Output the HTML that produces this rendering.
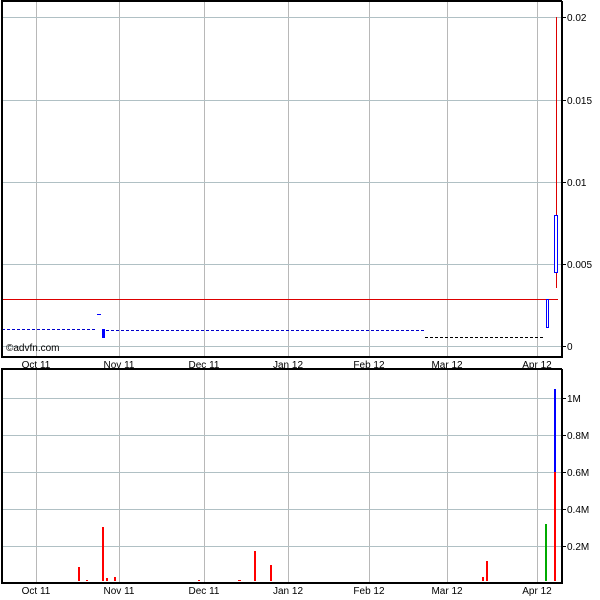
<!DOCTYPE html>
<html><head><style>body{margin:0;background:#fff}svg{display:block}text{font-family:"Liberation Sans",sans-serif;font-size:10px;fill:#000}</style></head><body>
<svg width="600" height="600" xmlns="http://www.w3.org/2000/svg">
<g stroke="#b8b8b8" stroke-width="1">
<line x1="36.5" y1="2" x2="36.5" y2="356"/><line x1="119.5" y1="2" x2="119.5" y2="356"/><line x1="204.5" y1="2" x2="204.5" y2="356"/><line x1="288.5" y1="2" x2="288.5" y2="356"/><line x1="369.5" y1="2" x2="369.5" y2="356"/><line x1="447.5" y1="2" x2="447.5" y2="356"/><line x1="537.5" y1="2" x2="537.5" y2="356"/>
<line x1="36.5" y1="370" x2="36.5" y2="583"/><line x1="119.5" y1="370" x2="119.5" y2="583"/><line x1="204.5" y1="370" x2="204.5" y2="583"/><line x1="288.5" y1="370" x2="288.5" y2="583"/><line x1="369.5" y1="370" x2="369.5" y2="583"/><line x1="447.5" y1="370" x2="447.5" y2="583"/><line x1="537.5" y1="370" x2="537.5" y2="583"/>
</g>
<g stroke="#b0c0c4" stroke-width="1">
<line x1="2" y1="17.5" x2="562" y2="17.5"/><line x1="2" y1="100.5" x2="562" y2="100.5"/><line x1="2" y1="182.5" x2="562" y2="182.5"/><line x1="2" y1="264.5" x2="562" y2="264.5"/><line x1="2" y1="346.5" x2="562" y2="346.5"/>
<line x1="2" y1="398.5" x2="562" y2="398.5"/><line x1="2" y1="435.5" x2="562" y2="435.5"/><line x1="2" y1="472.5" x2="562" y2="472.5"/><line x1="2" y1="509.5" x2="562" y2="509.5"/><line x1="2" y1="546.5" x2="562" y2="546.5"/>
</g>
<line x1="2" y1="299.5" x2="558" y2="299.5" stroke="#d00" stroke-width="1"/>
<line x1="2" y1="329.5" x2="97" y2="329.5" stroke="#00c" stroke-dasharray="3,2"/>
<line x1="106" y1="330.5" x2="425" y2="330.5" stroke="#00c" stroke-dasharray="3,2"/>
<line x1="425" y1="337.5" x2="543" y2="337.5" stroke="#000" stroke-dasharray="3,2"/>
<rect x="97" y="314" width="4" height="1" fill="#00f"/>
<rect x="102" y="329" width="3" height="9" fill="#00f"/>
<line x1="556.5" y1="17" x2="556.5" y2="288" stroke="#d00"/>
<rect x="554.5" y="215.5" width="3" height="57" fill="#fff" stroke="#00f"/>
<rect x="546.5" y="299.5" width="2" height="28" fill="#fff" stroke="#00f"/>
<g fill="none" stroke="#000" stroke-width="2">
<polyline points="562,1 2,1 2,357 562,357 562,1"/>
<polyline points="562,369 2,369 2,583 562,583 562,369"/>
</g>
<g stroke="#000"><line x1="562" y1="17.5" x2="566" y2="17.5"/><line x1="562" y1="100.5" x2="566" y2="100.5"/><line x1="562" y1="182.5" x2="566" y2="182.5"/><line x1="562" y1="264.5" x2="566" y2="264.5"/><line x1="562" y1="346.5" x2="566" y2="346.5"/>
<line x1="562" y1="398.5" x2="566" y2="398.5"/><line x1="562" y1="435.5" x2="566" y2="435.5"/><line x1="562" y1="472.5" x2="566" y2="472.5"/><line x1="562" y1="509.5" x2="566" y2="509.5"/><line x1="562" y1="546.5" x2="566" y2="546.5"/></g>
<g fill="#f00">
<rect x="78" y="567" width="2" height="14"/><rect x="86" y="580" width="2" height="1"/><rect x="102" y="527" width="2" height="54"/><rect x="106" y="578" width="2" height="3"/><rect x="114" y="577" width="2" height="4"/>
<rect x="198" y="580" width="2" height="1"/><rect x="238" y="580" width="3" height="1"/><rect x="254" y="551" width="2" height="30"/><rect x="270" y="565" width="2" height="16"/>
<rect x="482" y="577" width="2" height="4"/><rect x="486" y="561" width="2" height="20"/><rect x="554" y="472" width="2" height="109"/>
</g>
<rect x="545" y="524" width="2" height="57" fill="#0a0"/>
<rect x="554" y="389" width="2" height="83" fill="#00f"/>
<g>
<text x="567" y="21">0.02</text><text x="567" y="104">0.015</text><text x="567" y="186">0.01</text><text x="567" y="268">0.005</text><text x="567" y="350">0</text>
<text x="567" y="402">1M</text><text x="567" y="439">0.8M</text><text x="567" y="476">0.6M</text><text x="567" y="513">0.4M</text><text x="567" y="550">0.2M</text>
</g>
<text x="6" y="351" font-size="11">©advfn.com</text>
<g text-anchor="middle">
<text x="36" y="368">Oct 11</text><text x="119" y="368">Nov 11</text><text x="204" y="368">Dec 11</text><text x="288" y="368">Jan 12</text><text x="369" y="368">Feb 12</text><text x="447" y="368">Mar 12</text><text x="537" y="368">Apr 12</text>
<text x="36" y="594">Oct 11</text><text x="119" y="594">Nov 11</text><text x="204" y="594">Dec 11</text><text x="288" y="594">Jan 12</text><text x="369" y="594">Feb 12</text><text x="447" y="594">Mar 12</text><text x="537" y="594">Apr 12</text>
</g>
</svg>
</body></html>
